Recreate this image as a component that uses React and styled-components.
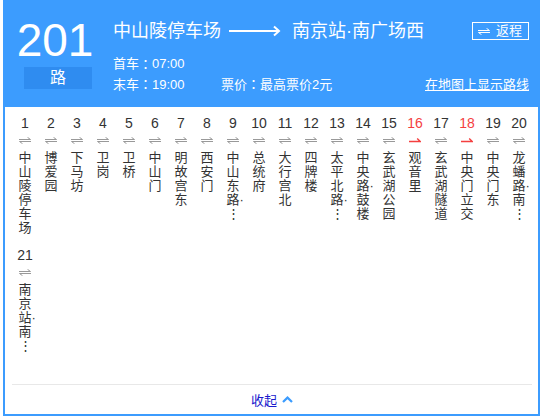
import React from "react";
import styled, { createGlobalStyle } from "styled-components";

const GlobalStyle = createGlobalStyle`
  body {
    margin: 0;
    background: #fff;
    font-family: "Liberation Sans", "Noto Sans CJK SC", sans-serif;
  }
`;

const BLUE = "#3c9cfe";

const stations = [
  { n: 1, name: "中山陵停车场" },
  { n: 2, name: "博爱园" },
  { n: 3, name: "下马坊" },
  { n: 4, name: "卫岗" },
  { n: 5, name: "卫桥" },
  { n: 6, name: "中山门" },
  { n: 7, name: "明故宫东" },
  { n: 8, name: "西安门" },
  { n: 9, name: "中山东路·…" },
  { n: 10, name: "总统府" },
  { n: 11, name: "大行宫北" },
  { n: 12, name: "四牌楼" },
  { n: 13, name: "太平北路·…" },
  { n: 14, name: "中央路·鼓楼" },
  { n: 15, name: "玄武湖公园" },
  { n: 16, name: "观音里", oneWay: true },
  { n: 17, name: "玄武湖隧道" },
  { n: 18, name: "中央门立交", oneWay: true },
  { n: 19, name: "中央门东" },
  { n: 20, name: "龙蟠路·南…" },
  { n: 21, name: "南京站·南…" },
];

// one character per line, the middle dot hangs after the previous one
const toLines = (name) => {
  const lines = [];
  for (const ch of name) {
    if (ch === "·" && lines.length) lines[lines.length - 1].dot = true;
    else lines.push({ ch: ch === "…" ? "⋮" : ch, dot: false });
  }
  return lines;
};

const Box = styled.div`
  box-sizing: border-box;
  width: 537px;
  margin-left: 3px;
  border: 2px solid ${BLUE};
  background: #fff;
`;

const Header = styled.div`
  display: flex;
  align-items: flex-start;
  height: 105px;
  box-sizing: border-box;
  padding: 15px 9px 0 17px;
  background: ${BLUE};
  color: #fff;
`;

const LineNo = styled.div`
  display: flex;
  flex-direction: column;
  align-items: center;
  width: 70px;
`;

const BigNumber = styled.div`
  font-size: 46px;
  line-height: 46px;
  margin-right: 4px;
`;

const Badge = styled.div`
  margin: 4px 0 0 2px;
  width: 68px;
  height: 22px;
  line-height: 22px;
  text-align: center;
  font-size: 16px;
  background: #2f8cf0;
`;

const Info = styled.div`
  flex: 1;
  margin: 4px 0 0 21px;
`;

const TitleRow = styled.div`
  display: flex;
  align-items: center;
  font-size: 18px;
  line-height: 20px;
`;

const Arrow = styled.svg`
  margin: 0 11px 0 8px;
`;

const ReturnButton = styled.div`
  margin-left: auto;
  display: flex;
  align-items: center;
  gap: 6px;
  box-sizing: border-box;
  height: 18px;
  padding: 0 6px 0 5px;
  border: 1px solid #fff;
  font-size: 13px;
  line-height: 16px;
`;

const InfoRow = styled.div`
  display: flex;
  align-items: center;
  font-size: 13px;
  line-height: 20px;
  margin-top: ${(p) => p.$top || 0}px;
`;

const Colon = styled.span`
  font-family: "Noto Sans CJK JP", sans-serif;
`;

const Time = styled.span`
  width: 108px;
`;

const MapLink = styled.a`
  margin-left: auto;
  color: #fff;
  text-decoration: underline;
  cursor: pointer;
`;

const Stations = styled.div`
  display: flex;
  flex-wrap: wrap;
  align-items: flex-start;
  row-gap: 12px;
  padding: 8px 6px 31px 7px;
`;

const Station = styled.div`
  width: 26px;
  display: flex;
  flex-direction: column;
  align-items: center;
  color: #333;
`;

const Num = styled.div`
  font-size: 14px;
  line-height: 16px;
  color: ${(p) => (p.$red ? "#f43f3f" : "#333")};
`;

const Dir = styled.svg`
  display: block;
  margin: 6px 0 7px;
`;

const Char = styled.div`
  font-size: 13px;
  line-height: 14px;
  text-align: center;
`;

const Dot = styled.span`
  display: inline-block;
  width: 0;
`;

const Footer = styled.div`
  display: flex;
  justify-content: center;
  align-items: center;
  gap: 5px;
  height: 29px;
  margin: 0 6px 0 7px;
  border-top: 1px solid #e8e8e8;
  font-size: 13px;
  color: #1a1acd;
  cursor: pointer;
`;

const SwapIcon = ({ color = "#999", width = 12 }) => (
  <svg width={width} height="7" viewBox="0 0 12 7" fill="none" stroke={color} strokeWidth="1">
    <path d="M0 2.5H11.5L8.5 0.3" />
    <path d="M12 4.5H0.5L3.5 6.7" />
  </svg>
);

const StationDir = ({ oneWay }) =>
  oneWay ? (
    <Dir width="12" height="7" viewBox="0 0 12 7" fill="none" stroke="#f43f3f" strokeWidth="1.4">
      <path d="M0 4.5H11.3L8.2 1.5" />
    </Dir>
  ) : (
    <Dir width="12" height="7" viewBox="0 0 12 7" fill="none" stroke="#999" strokeWidth="1">
      <path d="M0 2.5H11.5L8.5 0.3" />
      <path d="M12 4.5H0.5L3.5 6.7" />
    </Dir>
  );

export default function App() {
  return (
    <>
      <GlobalStyle />
      <Box>
        <Header>
          <LineNo>
            <BigNumber>201</BigNumber>
            <Badge>路</Badge>
          </LineNo>
          <Info>
            <TitleRow>
              <span>中山陵停车场</span>
              <Arrow width="52" height="12" viewBox="0 0 52 12" fill="none" stroke="#fff" strokeWidth="2">
                <path d="M0 6H49" />
                <path d="M45 1.5L50 6L45 10.5" />
              </Arrow>
              <span>南京站·南广场西</span>
              <ReturnButton>
                <SwapIcon color="#fff" />
                <span>返程</span>
              </ReturnButton>
            </TitleRow>
            <InfoRow $top={13}>
              首车<Colon>：</Colon>07:00
            </InfoRow>
            <InfoRow>
              <Time>
                末车<Colon>：</Colon>19:00
              </Time>
              <span>
                票价<Colon>：</Colon>最高票价2元
              </span>
              <MapLink>在地图上显示路线</MapLink>
            </InfoRow>
          </Info>
        </Header>

        <Stations>
          {stations.map((s) => (
            <Station key={s.n}>
              <Num $red={s.oneWay}>{s.n}</Num>
              <StationDir oneWay={s.oneWay} />
              {toLines(s.name).map((l, i) => (
                <Char key={i}>
                  {l.ch}
                  {l.dot && <Dot>·</Dot>}
                </Char>
              ))}
            </Station>
          ))}
        </Stations>

        <Footer>
          <span>收起</span>
          <svg width="11" height="7" viewBox="0 0 11 7" fill="none" stroke={BLUE} strokeWidth="2.2">
            <path d="M1 6L5.5 1.6L10 6" />
          </svg>
        </Footer>
      </Box>
    </>
  );
}
